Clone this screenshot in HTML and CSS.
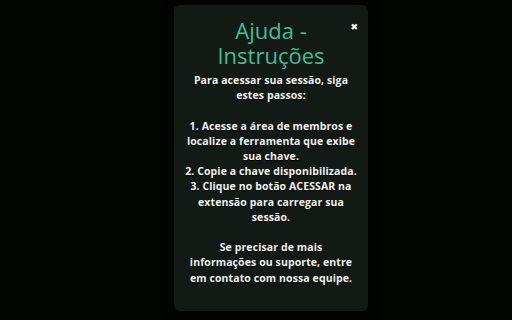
FILE: index.html
```html
<!DOCTYPE html>
<html lang="pt">
<head>
<meta charset="utf-8">
<link rel="stylesheet" href="styles.css">
</head>
<body>
<div class="page">
  <div class="modal">
    <span class="close">&#x2716;</span>
    <h1 class="title">Ajuda - Instruções</h1>
    <p class="text">Para acessar sua sessão, siga estes passos:</p>
    <p class="text">1. Acesse a área de membros e localize a ferramenta que exibe sua chave.<br>2. Copie a chave disponibilizada.<br>3. Clique no botão ACESSAR na extensão para carregar sua sessão.</p>
    <p class="text narrow">Se precisar de mais informações ou suporte, entre em contato com nossa equipe.</p>
  </div>
</div>
</body>
</html>
```
FILE: styles.css
```css
html, body {
  margin: 0;
  padding: 0;
  height: 100%;
  background: #020602;
}
.page {
  display: flex;
  justify-content: center;
  padding: 5px 0 0 30px;
}
.modal {
  position: relative;
  width: 194px;
  height: 306px;
  box-sizing: border-box;
  padding: 13px 11px 0;
  background: #131a15;
  border-radius: 6px;
  box-shadow: 0 0 12px rgba(0,0,0,0.9);
  text-align: center;
  font-family: "Open Sans", sans-serif;
  display: flex;
  flex-direction: column;
  align-items: center;
  gap: 15.2px;
}
.close {
  position: absolute;
  top: 17px;
  right: 10px;
  color: #ffffff;
  font-size: 9px;
  font-family: "DejaVu Sans", sans-serif;
}
.title {
  margin: 0 0 -10.2px;
  font-size: 22px;
  line-height: 25px;
  font-weight: 500;
  color: #3fbf95;
  padding: 0 6px;
}
.text {
  margin: 0;
  font-size: 10.5px;
  line-height: 15.2px;
  font-weight: 700;
  letter-spacing: 0.1px;
  color: #f2f2f2;
  text-shadow: 0 1px 1px rgba(0,0,0,0.8);
}
.narrow {
  max-width: 166px;
}
```
